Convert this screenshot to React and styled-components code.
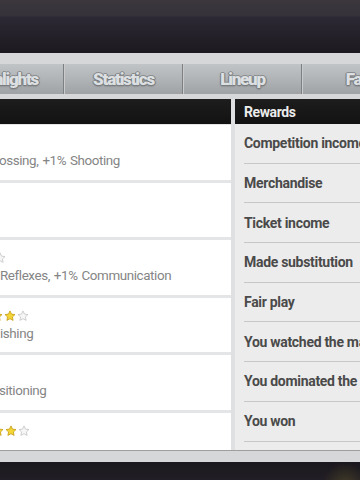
import React from 'react';
import styled, { createGlobalStyle } from 'styled-components';

const Global = createGlobalStyle`
  html, body { margin: 0; padding: 0; background: #1f1b22; }
  body { font-family: Roboto, "Liberation Sans", sans-serif; }
`;

const Screen = styled.div`
  width: 360px;
  height: 480px;
  overflow: hidden;
  display: flex;
  flex-direction: column;
  background: #1f1b22;
`;

const TopShade = styled.div`
  flex: none;
  height: 53px;
  background: linear-gradient(#3b373d 0, #36323a 16px, #2d2934 17px, #1d1920 53px);
`;

const Sheet = styled.div`
  flex: none;
  display: flex;
  flex-direction: column;
  background: #d6d7d9;
  padding: 11px 0 11px;
`;

const TabRow = styled.div`
  display: flex;
  gap: 1px;
  height: 30px;
  margin-left: -55px;
  background: #7d8083;
`;

const Tab = styled.div`
  flex: 0 0 117px;
  display: flex;
  align-items: center;
  justify-content: center;
  border-left: 1px solid #c9cbcd;
  background: linear-gradient(#c1c4c7, #b1b4b7 50%, #9fa2a5);
  font-family: Roboto, "Liberation Sans", sans-serif;
  font-weight: 900;
  font-size: 17px;
  letter-spacing: -1.2px;
  color: #dde0e2;
  text-shadow: 1px 0 0 #7b7e81, -1px 0 0 #7b7e81, 0 1px 0 #7b7e81, 0 -1px 0 #8a8d90,
    0 1px 2px #5c5f62;
  white-space: nowrap;
`;

const Content = styled.div`
  display: grid;
  grid-template-columns: 231px 1fr;
  column-gap: 4px;
  height: 351px;
  margin-top: 5px;
  border-bottom: 1px solid #9d9ea0;
  background: #dfe0e2;
`;

const Panel = styled.div`
  display: flex;
  flex-direction: column;
  overflow: hidden;
  background: ${(p) => p.$bg};
`;

const PanelHeader = styled.div`
  flex: none;
  height: 25px;
  display: flex;
  align-items: center;
  padding-left: 9px;
  background: linear-gradient(#1d1d1d, #121212);
  color: #ececec;
  font-weight: 700;
  font-size: 14px;
  letter-spacing: -0.4px;
`;

const CardList = styled.div`
  display: flex;
  flex-direction: column;
  gap: 3px;
  padding-top: 1px;
`;

const Card = styled.div`
  flex: none;
  height: 54.6px;
  box-sizing: border-box;
  padding-top: 12px;
  background: #ffffff;
  overflow: hidden;
  display: flex;
  flex-direction: column;
`;

const StarRow = styled.div`
  display: flex;
  gap: 1px;
  height: 12px;
  margin-left: ${(p) => p.$shift}px;
`;

const StatText = styled.div`
  margin-top: 4px;
  margin-left: ${(p) => p.$shift}px;
  line-height: 16px;
  font-size: 13.4px;
  letter-spacing: -0.4px;
  word-spacing: 1px;
  color: #858585;
  white-space: nowrap;
`;

const RewardRow = styled.div`
  flex: none;
  height: 38.7px;
  margin-left: 9px;
  display: flex;
  align-items: center;
  border-bottom: 1px solid #c7c7c7;
  font-weight: 700;
  font-size: 14px;
  letter-spacing: -0.3px;
  color: #4a4a4a;
  white-space: nowrap;
`;

const BottomShade = styled.div`
  flex: 1;
  background: radial-gradient(circle at 345px 22px, rgba(120, 110, 40, 0.35), rgba(0, 0, 0, 0) 22px),
    linear-gradient(#1a171d, #221e25);
`;

const Star = ({ filled }) => (
  <svg width="12" height="12" viewBox="0 0 24 24">
    <path
      d="M12 1.8l3 6.4 7 .9-5.1 4.8 1.3 6.9L12 17.4l-6.2 3.4 1.3-6.9L2 9.1l7-.9z"
      fill={filled ? '#f3d535' : '#f6f6f6'}
      stroke={filled ? '#c49a16' : '#c4c4c4'}
      strokeWidth="1.6"
      strokeLinejoin="round"
    />
  </svg>
);

const tabs = ['Highlights', 'Statistics', 'Lineup', 'Fans'];

const cards = [
  { stars: [], starShift: 0, text: 'ossing, +1% Shooting', textShift: -1 },
  { stars: [], starShift: 0, text: '', textShift: 0 },
  { stars: [false], starShift: -6, text: 'Reflexes, +1% Communication', textShift: 0 },
  { stars: [true, true, false], starShift: -9, text: 'ishing', textShift: 0 },
  { stars: [], starShift: 0, text: 'sitioning', textShift: -1 },
  { stars: [true, true, false], starShift: -8, text: '', textShift: 0 },
];

const rewards = [
  'Competition income',
  'Merchandise',
  'Ticket income',
  'Made substitution',
  'Fair play',
  'You watched the match',
  'You dominated the match',
  'You won',
];

export default function App() {
  return (
    <Screen>
      <Global />
      <TopShade />
      <Sheet>
        <TabRow>
          {tabs.map((t) => (
            <Tab key={t}>{t}</Tab>
          ))}
        </TabRow>
        <Content>
          <Panel $bg="#e4e5e7">
            <PanelHeader />
            <CardList>
              {cards.map((c, i) => (
                <Card key={i}>
                  <StarRow $shift={c.starShift}>
                    {c.stars.map((f, j) => (
                      <Star key={j} filled={f} />
                    ))}
                  </StarRow>
                  <StatText $shift={c.textShift}>{c.text}</StatText>
                </Card>
              ))}
            </CardList>
          </Panel>
          <Panel $bg="#ececec">
            <PanelHeader>Rewards</PanelHeader>
            {rewards.map((r) => (
              <RewardRow key={r}>{r}</RewardRow>
            ))}
          </Panel>
        </Content>
      </Sheet>
      <BottomShade />
    </Screen>
  );
}
